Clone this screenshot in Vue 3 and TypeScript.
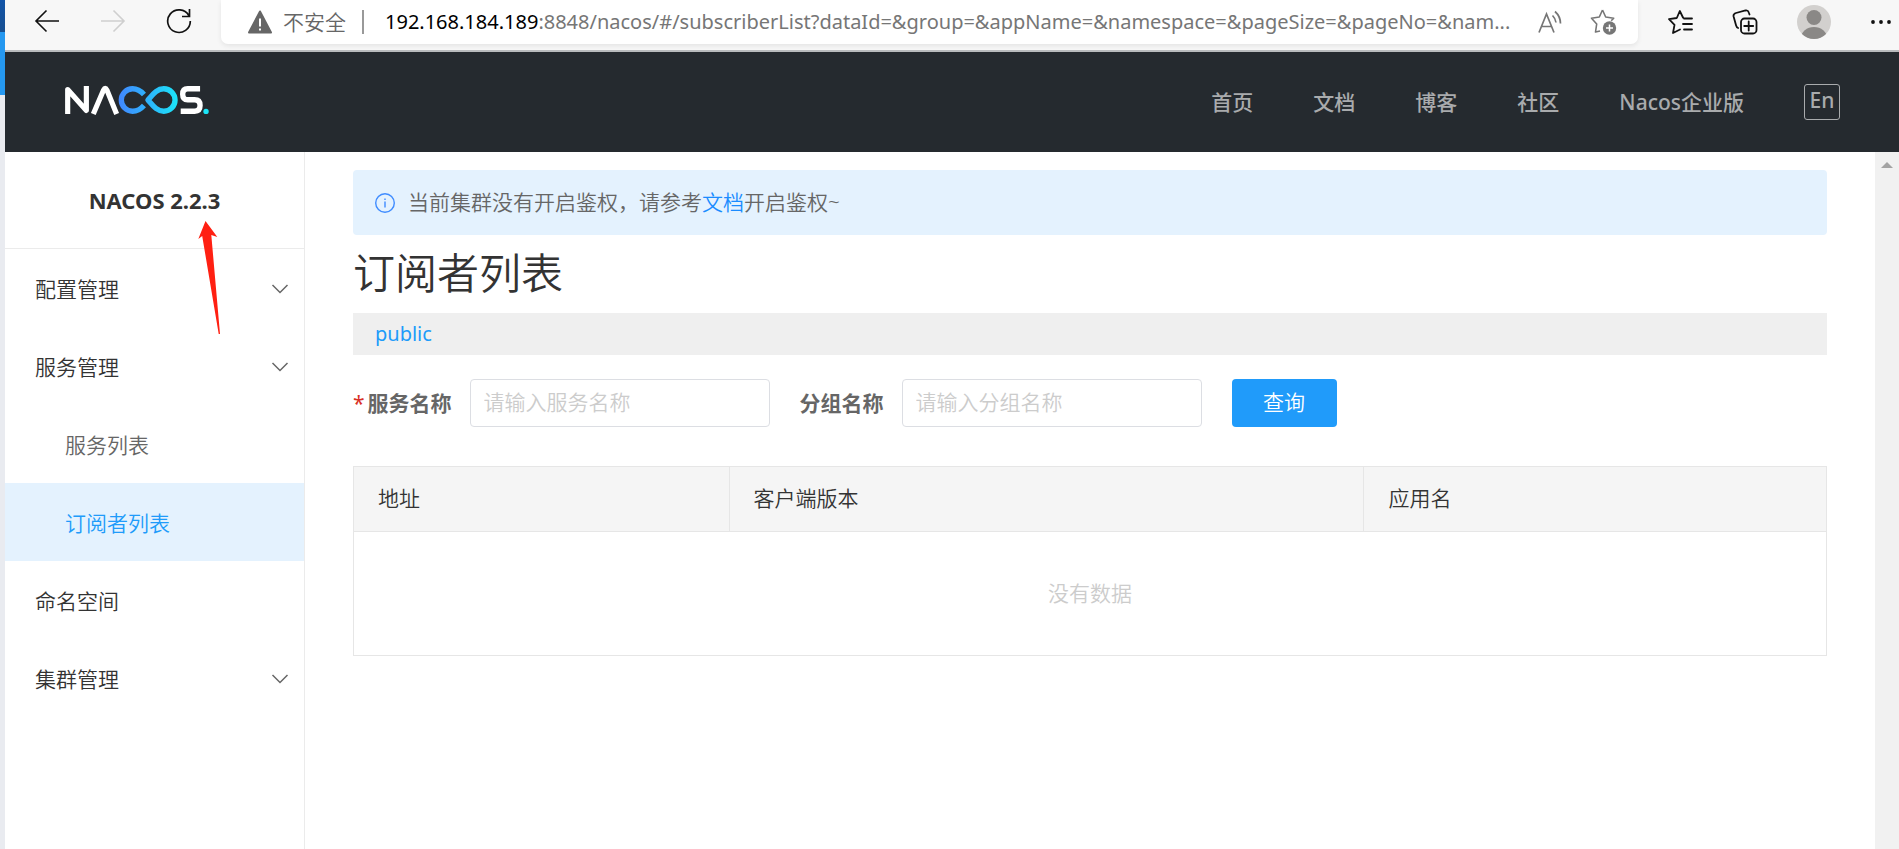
<script setup lang="ts">
import { ref } from 'vue'

interface MenuItem {
  label: string
  expandable?: boolean
  child?: boolean
  active?: boolean
}

const navLinks: string[] = ['首页', '文档', '博客', '社区', 'Nacos企业版']

const menu: MenuItem[] = [
  { label: '配置管理', expandable: true },
  { label: '服务管理', expandable: true },
  { label: '服务列表', child: true },
  { label: '订阅者列表', child: true, active: true },
  { label: '命名空间' },
  { label: '集群管理', expandable: true },
]

const columns: string[] = ['地址', '客户端版本', '应用名']

const serviceName = ref('')
const groupName = ref('')
</script>

<template>
  <div class="screen">
    <div class="backdrop">
      <div class="backdrop-dark"></div>
      <div class="backdrop-blue"></div>
    </div>

    <div class="window">
      <div class="toolbar">
        <div class="nav-buttons">
          <button class="tool" type="button" aria-label="后退">
            <svg width="26" height="24" viewBox="0 0 26 24" fill="none" stroke="#111" stroke-width="1.6"><path d="M25 12H2M12.500 1.500L2 12l10.500 10.500" /></svg>
          </button>
          <button class="tool" type="button" aria-label="前进">
            <svg width="26" height="24" viewBox="0 0 26 24" fill="none" stroke="#cfcfcf" stroke-width="1.600"><path d="M1 12h23M13.500 1.500L24 12 13.500 22.500" /></svg>
          </button>
          <button class="tool" type="button" aria-label="刷新">
            <svg width="26" height="26" viewBox="0 0 26 26" fill="none" stroke="#111" stroke-width="1.700"><path d="M22.800 7.500A11.300 11.300 0 1 0 24.300 13M23.500 1v7.500H16" /></svg>
          </button>
        </div>

        <div class="address">
          <svg class="warn" width="24" height="24" viewBox="0 0 24 24"><path d="M12 1.500L23 22.500H1z" fill="#666" stroke="#666" stroke-width="2" stroke-linejoin="round" /><path d="M12 8.500v8M12 18.500v2" stroke="#fff" stroke-width="2" /></svg>
          <span class="insecure">不安全</span>
          <span class="divider"></span>
          <div class="url" role="textbox" aria-label="地址"><span class="host">192.168.184.189</span>:8848/nacos/#/subscriberList?dataId=&amp;group=&amp;appName=&amp;namespace=&amp;pageSize=&amp;pageNo=&amp;nam...</div>
          <button class="tool" type="button" aria-label="朗读">
            <svg width="24" height="24" viewBox="0 0 24 24" fill="none" stroke="#767676" stroke-width="1.700"><path d="M1 22.500L8.500 4 16 22.500M3.500 16.500h10M14.500 5.500q3 3 3.500 7M17 1.500q5.500 5 5.500 12" /></svg>
          </button>
          <button class="tool" type="button" aria-label="收藏此页">
            <svg width="28" height="28" viewBox="0 0 28 28" fill="none" stroke="#767676" stroke-width="1.600" stroke-linejoin="round"><path d="M12.500 2l3.200 7 8 1.200-2.500 2.500M10 23l-4.500 1 1.200-8L1.500 10.200l7.800-1.200L12.500 2" /><circle cx="19.500" cy="20" r="6.700" fill="#767676" stroke="none" /><path d="M19.500 16.500v7M16 20h7" stroke="#fff" stroke-width="1.500" /></svg>
          </button>
        </div>

        <div class="actions">
          <button class="tool" type="button" aria-label="收藏夹">
            <svg width="26" height="26" viewBox="0 0 26 26" fill="none" stroke="#111" stroke-width="1.800" stroke-linejoin="round" stroke-linecap="round"><path d="M16 8.500L12.800 2l-3 7L2 10.200l5.500 5.600L6 24l7-3.500M17 9.500h8M16 15h9M17 20.500h8" /></svg>
          </button>
          <button class="tool" type="button" aria-label="集锦">
            <svg width="26" height="26" viewBox="0 0 26 26" fill="none" stroke="#111" stroke-width="1.800" stroke-linecap="round"><rect x="9" y="9.500" width="15.500" height="15" rx="3.500" /><path d="M16.700 12.500v9M12.200 17h9M17.500 5.500l-.7-2Q16 1 13.500 1.500L4 4Q1 5 1.600 7.500l2.500 9q.6 2 2 2.500" /></svg>
          </button>
          <button class="tool" type="button" aria-label="个人资料">
            <svg width="34" height="34" viewBox="0 0 34 34"><defs><clipPath id="avatar"><circle cx="17" cy="17" r="17" /></clipPath></defs><g clip-path="url(#avatar)"><rect width="34" height="34" fill="#d2d0ce" /><circle cx="17" cy="12.500" r="7.500" fill="#8a8886" /><ellipse cx="17" cy="33" rx="13" ry="11" fill="#8a8886" /></g></svg>
          </button>
          <button class="tool" type="button" aria-label="更多">
            <svg width="22" height="6" viewBox="0 0 22 6" fill="#111"><circle cx="3" cy="3" r="1.900" /><circle cx="11" cy="3" r="1.900" /><circle cx="19" cy="3" r="1.900" /></svg>
          </button>
        </div>
      </div>

      <header class="header">
        <a class="logo" href="#" aria-label="Nacos">
          <svg width="145" height="30" viewBox="0 0 146 30" fill="none">
            <defs>
              <linearGradient id="loop" gradientUnits="userSpaceOnUse" x1="54" y1="0" x2="114" y2="0">
                <stop offset="0" stop-color="#4187ff" />
                <stop offset="0.500" stop-color="#2db4fb" />
                <stop offset="1" stop-color="#1be6f8" />
              </linearGradient>
            </defs>
            <path d="M2.700 29V4.500L21.500 25.500V1" stroke="#fff" stroke-width="5.200" stroke-linejoin="round" />
            <path d="M28.500 29L38.800 5q1.700-3.500 3.400 0L52 29" stroke="#fff" stroke-width="5.200" />
            <path d="M79.500 9.500C76 5.500 72.500 3.700 68 3.700a11.300 11.300 0 0 0 0 22.600c4.500 0 8-1.800 11.500-5.800" stroke="url(#loop)" stroke-width="5.400" />
            <path d="M83.500 15C88 10 92 3.700 99.500 3.700a11.300 11.300 0 0 1 0 22.600C92 26.300 88 20 83.500 15z" stroke="url(#loop)" stroke-width="5.400" stroke-linejoin="round" />
            <path d="M136 3.700h-12.500q-5 0-5 5.500t5 5.600h7q5.500 0 5.500 5.700t-5.500 5.800H116.500" stroke="#fff" stroke-width="5.400" />
            <circle cx="142" cy="26.500" r="2.700" fill="#1be6f8" />
          </svg>
        </a>
        <nav class="links">
          <a v-for="link in navLinks" :key="link" href="#">{{ link }}</a>
          <button class="lang" type="button">En</button>
        </nav>
      </header>

      <div class="body">
        <aside class="sidebar">
          <h2 class="version">NACOS 2.2.3</h2>
          <nav class="menu">
            <a v-for="item in menu" :key="item.label" class="item" :class="{ child: item.child, active: item.active }" href="#">
              <span>{{ item.label }}</span>
              <svg v-if="item.expandable" width="18" height="12" viewBox="0 0 18 12" fill="none" stroke="#666" stroke-width="1.500"><path d="M1.500 2L9 9.500 16.500 2" /></svg>
            </a>
          </nav>
          <svg class="pointer" width="24" height="116" viewBox="0 0 24 116"><path d="M8.500 1L20.300 17l-6-2L23 114h-1.300L5.200 16l-3.900 3z" fill="#ff2012" /></svg>
        </aside>

        <main class="main">
          <div class="notice">
            <svg width="22" height="22" viewBox="0 0 22 22" fill="none" stroke="#3f8cff" stroke-width="1.400"><circle cx="11" cy="11" r="9.300" /><path d="M11 9.500v6M11 6.500v1.600" /></svg>
            <p>当前集群没有开启鉴权，请参考<a href="#">文档</a>开启鉴权~</p>
          </div>

          <h1 class="title">订阅者列表</h1>

          <div class="namespace"><a href="#">public</a></div>

          <form class="filters" @submit.prevent>
            <div class="field">
              <label for="service"><span class="required">*</span>服务名称</label>
              <input id="service" v-model="serviceName" type="text" placeholder="请输入服务名称" />
            </div>
            <div class="field">
              <label for="group">分组名称</label>
              <input id="group" v-model="groupName" type="text" placeholder="请输入分组名称" />
            </div>
            <button class="search" type="submit">查询</button>
          </form>

          <table class="table">
            <colgroup>
              <col class="col-address" />
              <col class="col-version" />
              <col />
            </colgroup>
            <thead>
              <tr><th v-for="name in columns" :key="name" scope="col">{{ name }}</th></tr>
            </thead>
            <tbody>
              <tr><td class="empty" :colspan="columns.length">没有数据</td></tr>
            </tbody>
          </table>
        </main>

        <div class="scrollbar">
          <svg width="12" height="6" viewBox="0 0 12 6"><path d="M6 0l6 6H0z" fill="#a3a3a3" /></svg>
        </div>
      </div>
    </div>
  </div>
</template>

<style>
body {
  margin: 0;
}
</style>

<style scoped>
.screen {
  display: flex;
  min-height: 100vh;
  background: #fff;
  color: #333;
  font-family: "Noto Sans", "Noto Sans CJK SC", sans-serif;
  font-size: 21px;
  font-weight: 350;
  line-height: 30px;
}

.screen *,
.screen *::before {
  box-sizing: border-box;
}

a {
  color: inherit;
  text-decoration: none;
}

button,
input {
  font: inherit;
}

svg {
  display: block;
  flex: none;
}

.backdrop {
  flex: none;
  width: 5px;
  background: #e9ebf0;
}

.backdrop-dark {
  height: 32px;
  background: linear-gradient(#1254a8, #174f90);
}

.backdrop-blue {
  height: 63px;
  background: #2598f0;
}

.window {
  display: flex;
  flex: 1;
  flex-direction: column;
  min-width: 0;
}

.toolbar {
  display: flex;
  flex: none;
  height: 52px;
  border-bottom: 2px solid #b9bbbd;
  background: #f7f7f7;
}

.tool {
  flex: none;
  padding: 0;
  border: 0;
  background: none;
}

.nav-buttons {
  display: flex;
  flex: none;
  align-items: center;
  gap: 40px;
  width: 216px;
  height: 42px;
  padding-left: 29px;
}

.address {
  display: flex;
  flex: 1;
  align-items: center;
  min-width: 0;
  height: 44px;
  padding: 0 20px 0 27px;
  border-radius: 0 0 7px 7px;
  background: #fff;
  box-shadow: 0 2px 5px rgba(0, 0, 0, 0.08);
  color: #767676;
}

.insecure {
  margin-left: 11px;
  color: #666;
  white-space: nowrap;
}

.divider {
  width: 2px;
  height: 24px;
  margin: 0 21px 0 16px;
  background: #999;
}

.url {
  flex: 1;
  overflow: hidden;
  font-size: 20px;
  font-weight: 400;
  text-overflow: ellipsis;
  white-space: nowrap;
}

.host {
  color: #000;
}

.address .tool + .tool {
  margin-left: 28px;
}

.actions {
  display: flex;
  flex: none;
  align-items: center;
  gap: 39px;
  height: 44px;
  padding: 0 7px 0 29px;
}

.header {
  display: flex;
  flex: none;
  align-items: center;
  justify-content: space-between;
  height: 100px;
  padding: 0 59px 0 60px;
  background: #252a2f;
}

.logo {
  padding-bottom: 4px;
}

.links {
  display: flex;
  align-items: center;
  gap: 60px;
  color: #a9abad;
  font-weight: 500;
}

.lang {
  width: 36px;
  height: 36px;
  padding: 0 0 4px;
  border: 1px solid #a9abad;
  border-radius: 3px;
  background: none;
  color: #a9abad;
}

.body {
  display: flex;
  flex: 1;
}

.sidebar {
  position: relative;
  flex: none;
  width: 300px;
  border-right: 1px solid #ebebeb;
}

.version {
  margin: 0;
  padding: 33px 0;
  border-bottom: 1px solid #ebebeb;
  font-size: 22px;
  font-weight: 700;
  line-height: 30px;
  text-align: center;
}

.item {
  display: flex;
  align-items: center;
  justify-content: space-between;
  height: 78px;
  padding: 2px 15px 0 30px;
}

.item.child {
  padding-left: 60px;
  color: #666;
}

.item.active {
  background: #e4f2fe;
  color: #209bfa;
}

.pointer {
  position: absolute;
  top: 68px;
  left: 192px;
}

.main {
  flex: 1;
  min-width: 0;
  padding: 18px 48px;
}

.notice {
  display: flex;
  align-items: center;
  gap: 12px;
  height: 65px;
  padding: 0 21px;
  border-radius: 4px;
  background: #e4f2fe;
  color: #666;
}

.notice p {
  margin: 0;
  padding-bottom: 2px;
}

.notice a {
  color: #1a8cff;
}

.title {
  margin: 0;
  padding: 8px 0 10px;
  font-size: 42px;
  font-weight: 350;
  line-height: 60px;
}

.namespace {
  padding: 6px 22px;
  background: #efefef;
  color: #209bfa;
  font-size: 20px;
  font-weight: 400;
}

.filters {
  display: flex;
  align-items: center;
  gap: 30px;
  margin: 24px 0 39px;
}

.field {
  display: flex;
  align-items: center;
  gap: 18px;
}

.field label {
  color: #666;
  font-weight: 700;
  white-space: nowrap;
}

.required {
  margin-right: 3px;
  color: #d93026;
  font-weight: 400;
}

.field input {
  width: 300px;
  height: 48px;
  padding: 0 13px 2px;
  border: 1px solid #dcdee3;
  border-radius: 4px;
  background: #fff;
  color: #333;
}

.field input::placeholder {
  color: #ccc;
  opacity: 1;
}

.search {
  width: 105px;
  height: 48px;
  padding: 0 0 2px;
  border: 0;
  border-radius: 4px;
  background: #209bfa;
  color: #fff;
}

.table {
  width: 100%;
  border-collapse: collapse;
  table-layout: fixed;
}

.table th,
.table td {
  border: 1px solid #e6e6e6;
}

.table th {
  height: 65px;
  padding: 0 24px 2px;
  background: #f5f5f5;
  font-weight: 350;
  text-align: left;
}

.table .empty {
  height: 124px;
  padding: 0 0 2px;
  color: #ccc;
  text-align: center;
}

.col-address {
  width: 25.5%;
}

.col-version {
  width: 43.1%;
}

.scrollbar {
  display: flex;
  flex: none;
  justify-content: center;
  width: 24px;
  padding-top: 10px;
  background: #f1f1f1;
}
</style>
